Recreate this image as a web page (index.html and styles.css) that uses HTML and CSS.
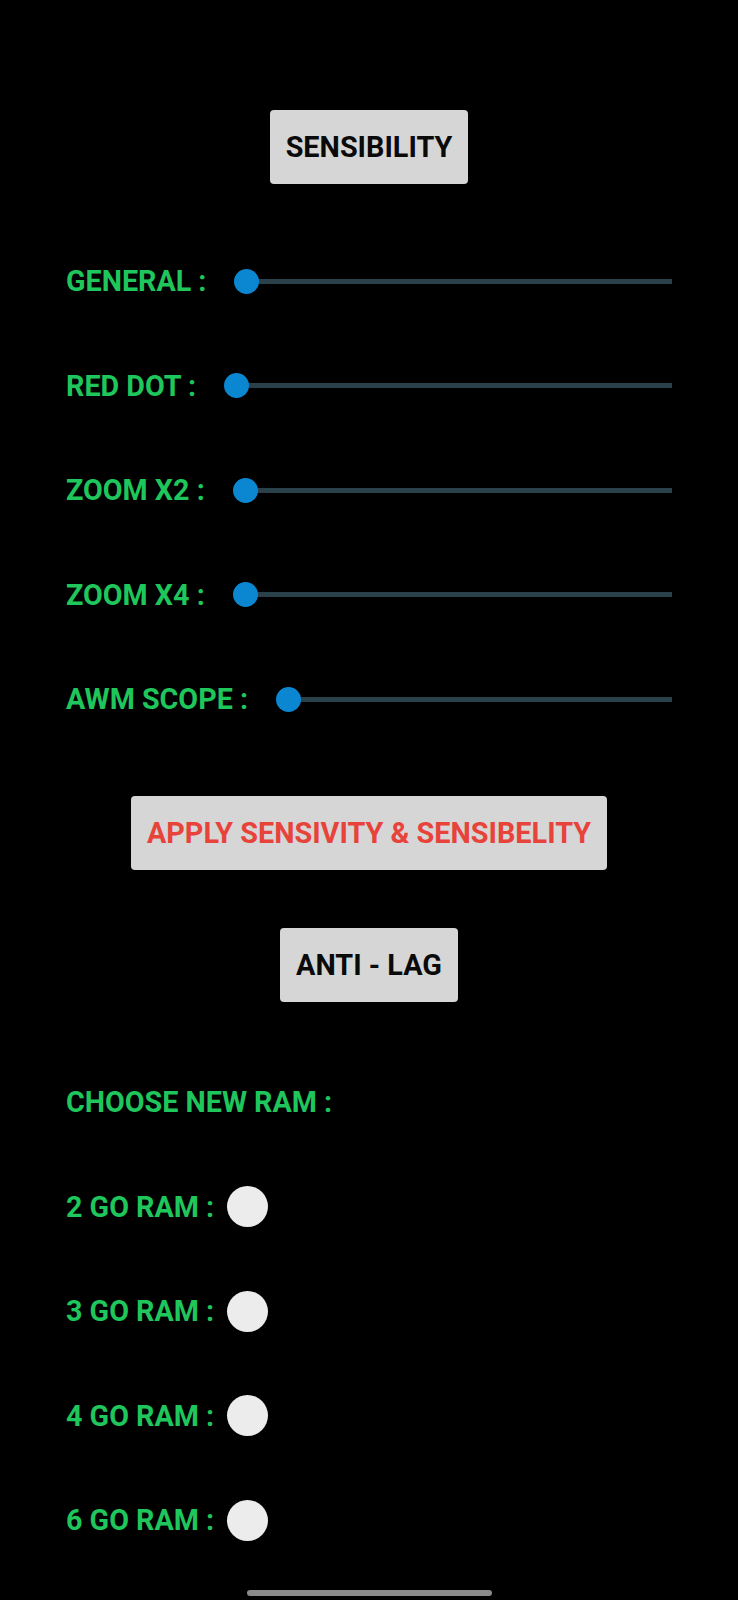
FILE: index.html
```html
<!DOCTYPE html>
<html lang="en">
<head>
<meta charset="utf-8">
<title>Sensibility</title>
<link rel="stylesheet" href="styles.css">
</head>
<body>
<main class="screen">
  <div class="btn-row">
    <button class="btn">SENSIBILITY</button>
  </div>

  <section class="sliders">
    <div class="row">
      <span class="label">GENERAL :</span>
      <div class="slider"><span class="thumb"></span><span class="track"></span></div>
    </div>
    <div class="row">
      <span class="label">RED DOT :</span>
      <div class="slider"><span class="thumb"></span><span class="track"></span></div>
    </div>
    <div class="row">
      <span class="label">ZOOM X2 :</span>
      <div class="slider"><span class="thumb"></span><span class="track"></span></div>
    </div>
    <div class="row">
      <span class="label">ZOOM X4 :</span>
      <div class="slider"><span class="thumb"></span><span class="track"></span></div>
    </div>
    <div class="row">
      <span class="label">AWM SCOPE :</span>
      <div class="slider"><span class="thumb"></span><span class="track"></span></div>
    </div>
  </section>

  <div class="btn-row apply-row">
    <button class="btn btn-red">APPLY SENSIVITY &amp; SENSIBELITY</button>
  </div>

  <div class="btn-row lag-row">
    <button class="btn">ANTI - LAG</button>
  </div>

  <section class="ram">
    <div class="row">
      <span class="label">CHOOSE NEW RAM :</span>
    </div>
    <div class="row">
      <span class="label">2 GO RAM :</span>
      <span class="radio"></span>
    </div>
    <div class="row">
      <span class="label">3 GO RAM :</span>
      <span class="radio"></span>
    </div>
    <div class="row">
      <span class="label">4 GO RAM :</span>
      <span class="radio"></span>
    </div>
    <div class="row">
      <span class="label">6 GO RAM :</span>
      <span class="radio"></span>
    </div>
  </section>

  <div class="home-indicator"></div>
</main>
</body>
</html>
```

FILE: styles.css
```css
* {
  box-sizing: border-box;
}

html, body {
  margin: 0;
  padding: 0;
  background: #000;
}

body {
  font-family: Roboto, "Liberation Sans", sans-serif;
}

.screen {
  position: relative;
  width: 738px;
  height: 1600px;
  padding: 110px 66px 0 66px;
  overflow: hidden;
}

.btn-row {
  display: flex;
  justify-content: center;
}

.btn {
  height: 74px;
  padding: 0 16px;
  border: none;
  border-radius: 4px;
  background: #d6d6d6;
  color: #0a0a0a;
  font-family: Roboto, "Liberation Sans", sans-serif;
  font-weight: 700;
  font-size: 28.8px;
  line-height: 74px;
}

.btn-red {
  color: #e8433a;
}

.sliders {
  display: flex;
  flex-direction: column;
  gap: 54.5px;
  margin-top: 72px;
}

.row {
  display: flex;
  align-items: center;
  height: 50px;
}

.label {
  color: #1fc65b;
  font-weight: 700;
  font-size: 28.7px;
  white-space: nowrap;
}

.slider {
  flex: 1;
  display: flex;
  align-items: center;
  margin-left: 28px;
}

.thumb {
  flex: none;
  width: 25px;
  height: 25px;
  border-radius: 50%;
  background: #0b87d1;
  position: relative;
  z-index: 1;
}

.track {
  flex: 1;
  height: 5px;
  margin-left: -12.5px;
  background: #2a414c;
}

.apply-row {
  margin-top: 72px;
}

.lag-row {
  margin-top: 58px;
}

.ram {
  display: flex;
  flex-direction: column;
  gap: 54.5px;
  margin-top: 75px;
}

.radio {
  flex: none;
  width: 41px;
  height: 41px;
  margin-left: 13px;
  border-radius: 50%;
  background: #ececec;
}

.home-indicator {
  position: absolute;
  left: 247px;
  bottom: 4px;
  width: 245px;
  height: 6px;
  border-radius: 3px;
  background: #8a8a8a;
}
```
